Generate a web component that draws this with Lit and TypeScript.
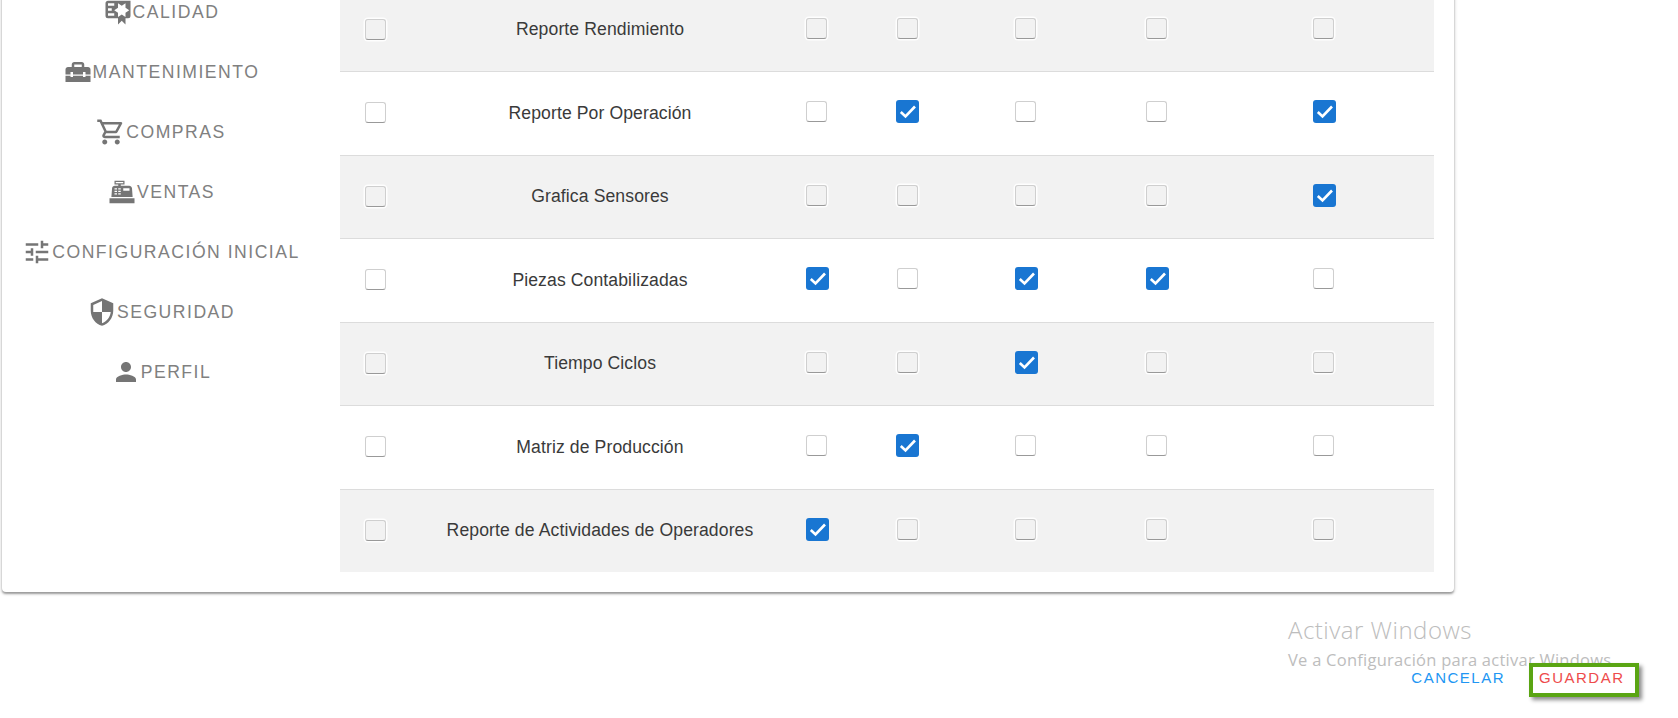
import {LitElement, html, css, svg} from 'lit';
import {customElement} from 'lit/decorators.js';

const ICONS = {
  calidad: 'M4,3C2.89,3 2,3.89 2,5V15A2,2 0 0,0 4,17H12V22L15,19L18,22V17H20A2,2 0 0,0 22,15V8L22,5V3H4M12,5L15,7L18,5V8.5L21,10.5L18,12.5V16L15,14L12,16V12.5L9,10.5L12,8.5V5M4,5H9V7H4V5M4,9H7V11H4V9M4,13H9V15H4V13Z',
  mantenimiento: 'M18 16H16V15H8V16H6V15H2V20H22V15H18V16M20 8H17V6C17 4.9 16.1 4 15 4H9C7.9 4 7 4.9 7 6V8H4C2.9 8 2 8.9 2 10V14H6V12H8V14H16V12H18V14H22V10C22 8.9 21.1 8 20 8M15 8H9V6H15V8Z',
  compras: 'M15.55 13c.75 0 1.41-.41 1.75-1.03l3.58-6.49c.37-.66-.11-1.48-.87-1.48H5.21l-.94-2H1v2h2l3.6 7.59-1.35 2.44C4.52 15.37 5.48 17 7 17h12v-2H7l1.1-2h7.45zM6.16 6h12.15l-2.76 5H8.53L6.16 6zM7 18c-1.1 0-1.99.9-1.99 2S5.9 22 7 22s2-.9 2-2-.9-2-2-2zm10 0c-1.1 0-1.99.9-1.99 2s.89 2 1.99 2 2-.9 2-2-.9-2-2-2z',
  ventas: 'M2,17H22V21H2V17M6.25,7H9V6H6V3H14V6H11V7H17.8C18.8,7 19.8,8 20,9L20.5,16H3.5L4.05,9C4.05,8 5.05,7 6.25,7M13,9V11H18V9H13M6,9V10H8V9H6M9,9V10H11V9H9M6,11V12H8V11H6M9,11V12H11V11H9M6,13V14H8V13H6M9,13V14H11V13H9M7,4V5H13V4H7Z',
  config: 'M3 17v2h6v-2H3zM3 5v2h10V5H3zm10 16v-2h8v-2h-8v-2h-2v6h2zM7 9v2H3v2h4v2h2V9H7zm14 4v-2H11v2h10zm-6-4h2V7h4V5h-4V3h-2v6z',
  seguridad: 'M12 1L3 5v6c0 5.55 3.84 10.74 9 12 5.16-1.26 9-6.45 9-12V5l-9-4zm0 10.99h7c-.53 4.12-3.28 7.79-7 8.94V12H5V6.3l7-3.11v8.8z',
  perfil: 'M12 12c2.21 0 4-1.79 4-4s-1.79-4-4-4-4 1.79-4 4 1.79 4 4 4zm0 2c-2.67 0-8 1.34-8 4v2h16v-2c0-2.66-5.33-4-8-4z',
};

const MENU: [keyof typeof ICONS, string][] = [
  ['calidad', 'CALIDAD'],
  ['mantenimiento', 'MANTENIMIENTO'],
  ['compras', 'COMPRAS'],
  ['ventas', 'VENTAS'],
  ['config', 'CONFIGURACIÓN INICIAL'],
  ['seguridad', 'SEGURIDAD'],
  ['perfil', 'PERFIL'],
];

// checks: indexes of the ticked boxes among the five action columns
const ROWS: {name: string; checks: number[]}[] = [
  {name: 'Reporte Rendimiento', checks: []},
  {name: 'Reporte Por Operación', checks: [1, 4]},
  {name: 'Grafica Sensores', checks: [4]},
  {name: 'Piezas Contabilizadas', checks: [0, 2, 3]},
  {name: 'Tiempo Ciclos', checks: [2]},
  {name: 'Matriz de Producción', checks: [1]},
  {name: 'Reporte de Actividades de Operadores', checks: [0]},
];

@customElement('app-root')
export class AppRoot extends LitElement {
  static styles = css`
    :host {
      display: block;
      position: relative;
      height: 718px;
      overflow: hidden;
      background: #fff;
      font-family: 'Liberation Sans', Arial, sans-serif;
    }
    .card {
      display: flex;
      width: 1452px;
      height: 604px;
      margin: -12px 0 0 2px;
      background: #fff;
      border-radius: 4px;
      box-shadow: 0 2px 2px rgba(0, 0, 0, 0.3), 0 1px 4px rgba(0, 0, 0, 0.2);
    }
    .menu {
      width: 318px;
      flex: none;
      margin-top: -6px;
    }
    .item {
      display: flex;
      align-items: center;
      justify-content: center;
      height: 60px;
      color: #808080;
      font-size: 17.6px;
      letter-spacing: 1.5px;
      white-space: nowrap;
    }
    .item svg {
      width: 30px;
      height: 30px;
      flex: none;
      fill: #757575;
    }
    .table {
      width: 1094px;
      margin: 0.5px 0 0 20px;
    }
    .row {
      display: grid;
      grid-template-columns: 70px 380px 54px 127px 110px 152px 182px 19px;
      align-items: center;
      justify-items: center;
      height: 83.5px;
      box-sizing: border-box;
      border-bottom: 1px solid #dcdcdc;
      color: #3a3a3a;
      font-size: 17.6px;
      letter-spacing: 0.1px;
    }
    .row:nth-child(odd) {
      background: #f2f2f2;
    }
    .row:last-child {
      height: 82.5px;
      border-bottom: none;
    }
    .box {
      width: 21px;
      height: 21px;
      box-sizing: border-box;
      border: 1px solid #cfcfcf;
      border-bottom-color: #999;
      border-radius: 3px;
      box-shadow: 0 0 0 1.5px rgba(255, 255, 255, 0.9);
      margin: 0 1px 2px 0;
    }
    .row:nth-child(even) .box {
      background: #fff;
      margin-bottom: 3px;
    }
    .box.first,
    .row:nth-child(even) .box.first {
      margin-right: 0;
      margin-bottom: 1px;
    }
    .row:nth-child(odd) .box.first {
      margin-bottom: 0;
    }
    .box.on {
      width: 23px;
      height: 23px;
      margin-right: 0;
      border: none;
      box-shadow: none;
      background: #1976d2 !important;
      display: flex;
    }
    .box.on svg {
      width: 23px;
      height: 23px;
      fill: none;
      stroke: #fff;
      stroke-width: 2.6;
    }
    .actions {
      position: relative;
      z-index: 1;
      display: flex;
      justify-content: flex-end;
      align-items: center;
      margin: 71px 39px 0 0;
      font-size: 15px;
      letter-spacing: 1.5px;
    }
    .cancel {
      color: #2196f3;
      margin-right: 24px;
      padding-bottom: 5px;
    }
    .save {
      color: #ee4b4b;
      box-sizing: border-box;
      width: 110px;
      height: 34px;
      padding: 0 0 5px 6px;
      display: flex;
      align-items: center;
      border: 4px solid #5aa513;
      box-shadow: 3px 3px 4px rgba(0, 0, 0, 0.45);
      background: #fff;
    }
    .watermark {
      position: absolute;
      left: 1288px;
      top: 614px;
      color: #bdbdbd;
      font-family: 'Open Sans', sans-serif;
      white-space: nowrap;
    }
    .watermark .big {
      font-size: 24px;
      line-height: 32px;
      font-weight: 300;
      letter-spacing: 0.5px;
    }
    .watermark .small {
      font-size: 16.5px;
      line-height: 22px;
      margin-top: 3px;
      letter-spacing: 0.25px;
    }
  `;

  private box(on: boolean, first = false) {
    if (on) {
      return html`<div class="box on">
        <svg viewBox="0 0 23 23">${svg`<path d="M4.8 12l4.7 4.5L19 6.5"></path>`}</svg>
      </div>`;
    }
    return html`<div class="box ${first ? 'first' : ''}"></div>`;
  }

  render() {
    return html`
      <div class="card">
        <nav class="menu">
          ${MENU.map(
            ([icon, label]) => html`<div class="item">
              <svg viewBox="0 0 24 24">${svg`<path d=${ICONS[icon]}></path>`}</svg>
              <span>${label}</span>
            </div>`
          )}
        </nav>
        <div class="table">
          ${ROWS.map(
            (row) => html`<div class="row">
              ${this.box(false, true)}
              <span>${row.name}</span>
              ${[0, 1, 2, 3, 4].map((i) => this.box(row.checks.includes(i)))}
            </div>`
          )}
        </div>
      </div>
      <div class="watermark">
        <div class="big">Activar Windows</div>
        <div class="small">Ve a Configuración para activar Windows</div>
      </div>
      <div class="actions">
        <span class="cancel">CANCELAR</span>
        <span class="save">GUARDAR</span>
      </div>
    `;
  }
}
